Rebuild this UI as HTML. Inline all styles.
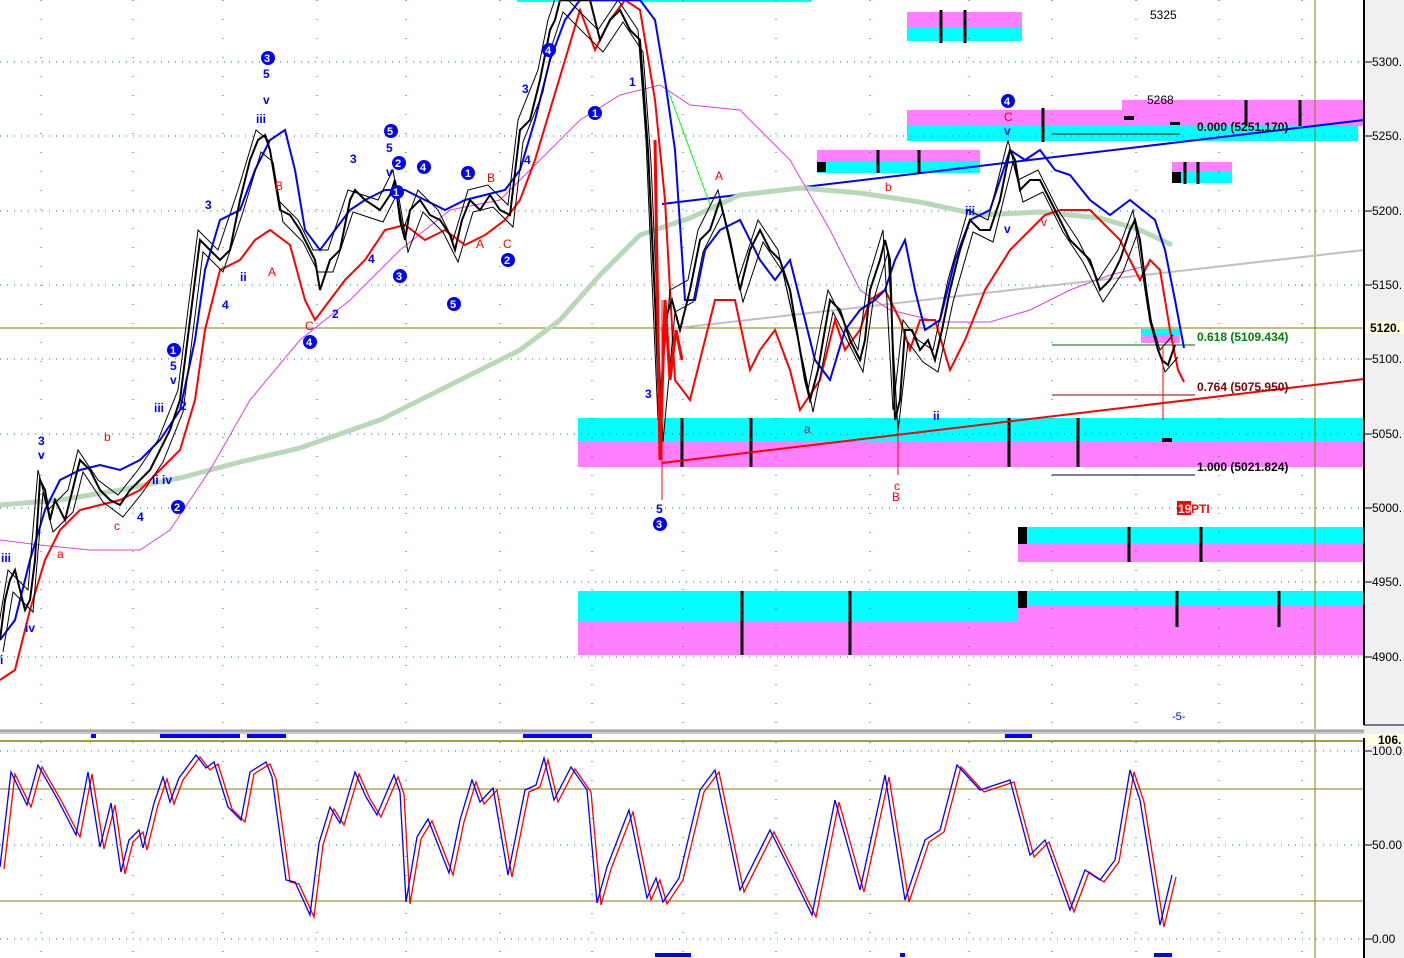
<!DOCTYPE html>
<html><head><meta charset="utf-8"><style>
html,body{margin:0;padding:0;background:#fff;}
svg{display:block;font-family:"Liberation Sans",sans-serif;}
</style></head><body>
<svg width="1404" height="958" viewBox="0 0 1404 958" xmlns="http://www.w3.org/2000/svg">
<rect width="1404" height="958" fill="#fff"/>
<!-- zones -->
<rect x="517" y="0" width="295" height="2" fill="#00ffff"/>
<rect x="907" y="12" width="115" height="15" fill="#ff80ff"/><rect x="907" y="27" width="115" height="14" fill="#00ffff"/>
<rect x="1122" y="100" width="242" height="12" fill="#ff80ff"/>
<rect x="907" y="110" width="457" height="16" fill="#ff80ff"/><rect x="907" y="126" width="451" height="15" fill="#00ffff"/>
<rect x="817" y="150" width="163" height="12" fill="#ff80ff"/><rect x="817" y="162" width="163" height="11" fill="#00ffff"/>
<rect x="1172" y="162" width="60" height="10" fill="#ff80ff"/><rect x="1172" y="172" width="60" height="11" fill="#00ffff"/>
<rect x="1141" y="329" width="39" height="7" fill="#00ffff"/><rect x="1141" y="336" width="39" height="7" fill="#ff80ff"/>
<rect x="578" y="418" width="786" height="24" fill="#00ffff"/><rect x="578" y="442" width="786" height="25" fill="#ff80ff"/>
<rect x="1018" y="527" width="346" height="17" fill="#00ffff"/><rect x="1018" y="544" width="346" height="18" fill="#ff80ff"/>
<rect x="578" y="591" width="440" height="30" fill="#00ffff"/><rect x="578" y="621" width="440" height="34" fill="#ff80ff"/>
<rect x="1018" y="591" width="346" height="15" fill="#00ffff"/><rect x="1018" y="606" width="346" height="49" fill="#ff80ff"/>
<!-- zone bars -->
<g stroke="#000" stroke-width="3">
<line x1="941" y1="10" x2="941" y2="43"/><line x1="965" y1="10" x2="965" y2="43"/>
<line x1="1043" y1="108" x2="1043" y2="142"/><line x1="1246" y1="100" x2="1246" y2="126"/><line x1="1300" y1="100" x2="1300" y2="126"/>
<line x1="878" y1="150" x2="878" y2="173"/><line x1="919" y1="150" x2="919" y2="173"/>
<line x1="1185" y1="162" x2="1185" y2="184"/><line x1="1198" y1="162" x2="1198" y2="184"/>
<line x1="682" y1="418" x2="682" y2="467"/><line x1="751" y1="418" x2="751" y2="467"/><line x1="1009" y1="418" x2="1009" y2="467"/><line x1="1078" y1="418" x2="1078" y2="467"/>
<line x1="1129" y1="527" x2="1129" y2="562"/><line x1="1201" y1="527" x2="1201" y2="562"/>
<line x1="742" y1="591" x2="742" y2="655"/><line x1="850" y1="591" x2="850" y2="655"/><line x1="1177" y1="591" x2="1177" y2="627"/><line x1="1279" y1="591" x2="1279" y2="627"/>
</g>
<rect x="817" y="162" width="9" height="10" fill="#000"/><rect x="1172" y="172" width="9" height="11" fill="#000"/>
<rect x="1018" y="527" width="9" height="17" fill="#000"/><rect x="1018" y="591" width="9" height="17" fill="#000"/>
<rect x="1162" y="438" width="10" height="4" fill="#000"/>
<rect x="1124" y="116" width="10" height="4" fill="#000"/><rect x="1170" y="122" width="10" height="3" fill="#000"/>
<!-- grid -->
<g stroke="#008080" stroke-width="1" stroke-dasharray="1,6">
<line x1="0" y1="62" x2="1364" y2="62"/><line x1="0" y1="136" x2="1364" y2="136"/><line x1="0" y1="211" x2="1364" y2="211"/><line x1="0" y1="285" x2="1364" y2="285"/><line x1="0" y1="359" x2="1364" y2="359"/><line x1="0" y1="434" x2="1364" y2="434"/><line x1="0" y1="508" x2="1364" y2="508"/><line x1="0" y1="582" x2="1364" y2="582"/><line x1="0" y1="657" x2="1364" y2="657"/>
<line x1="0" y1="751" x2="1364" y2="751"/><line x1="0" y1="845" x2="1364" y2="845"/><line x1="0" y1="939" x2="1364" y2="939"/>
</g>
<g stroke="#008080" stroke-width="1" stroke-dasharray="1,18">
<line x1="41" y1="0" x2="41" y2="728"/><line x1="133" y1="0" x2="133" y2="728"/><line x1="223" y1="0" x2="223" y2="728"/><line x1="317" y1="0" x2="317" y2="728"/><line x1="406" y1="0" x2="406" y2="728"/><line x1="500" y1="0" x2="500" y2="728"/><line x1="592" y1="0" x2="592" y2="728"/><line x1="683" y1="0" x2="683" y2="728"/><line x1="776" y1="0" x2="776" y2="728"/><line x1="870" y1="0" x2="870" y2="728"/><line x1="969" y1="0" x2="969" y2="728"/><line x1="1052" y1="0" x2="1052" y2="728"/><line x1="1136" y1="0" x2="1136" y2="728"/><line x1="1219" y1="0" x2="1219" y2="728"/><line x1="1302" y1="0" x2="1302" y2="728"/>
<line x1="41" y1="742" x2="41" y2="958"/><line x1="133" y1="742" x2="133" y2="958"/><line x1="223" y1="742" x2="223" y2="958"/><line x1="317" y1="742" x2="317" y2="958"/><line x1="406" y1="742" x2="406" y2="958"/><line x1="500" y1="742" x2="500" y2="958"/><line x1="592" y1="742" x2="592" y2="958"/><line x1="683" y1="742" x2="683" y2="958"/><line x1="776" y1="742" x2="776" y2="958"/><line x1="870" y1="742" x2="870" y2="958"/><line x1="969" y1="742" x2="969" y2="958"/><line x1="1052" y1="742" x2="1052" y2="958"/><line x1="1136" y1="742" x2="1136" y2="958"/><line x1="1219" y1="742" x2="1219" y2="958"/><line x1="1302" y1="742" x2="1302" y2="958"/>
</g>
<line x1="0" y1="328" x2="1364" y2="328" stroke="#808000" stroke-width="1"/>
<line x1="1315" y1="0" x2="1315" y2="958" stroke="#808000" stroke-width="1"/>
<!-- trend lines -->
<line x1="662" y1="204" x2="1364" y2="120" stroke="#0000ff" stroke-width="2"/>
<line x1="662" y1="463" x2="1364" y2="379" stroke="#ff0000" stroke-width="2"/>
<line x1="660" y1="330" x2="1364" y2="250" stroke="#c0c0c0" stroke-width="2"/>
<line x1="1052" y1="134" x2="1180" y2="134" stroke="#000" stroke-width="1"/>
<line x1="1052" y1="345" x2="1195" y2="345" stroke="#006400" stroke-width="1"/>
<line x1="1052" y1="395" x2="1195" y2="395" stroke="#800000" stroke-width="1"/>
<line x1="1052" y1="475" x2="1195" y2="475" stroke="#000" stroke-width="1"/>
<line x1="668" y1="90" x2="712" y2="210" stroke="#00ff00" stroke-width="1"/>
<!-- green MA -->
<polyline fill="none" stroke="#b8d8b8" stroke-width="5" points="0,505 60,500 120,490 180,478 240,462 300,448 380,420 460,380 520,350 560,320 600,275 640,235 690,218 740,195 800,188 860,193 920,202 980,215 1040,212 1100,218 1140,230 1172,245"/>
<!-- magenta MA -->
<polyline fill="none" stroke="#e040e0" stroke-width="1" points="0,540 40,545 90,550 140,550 170,530 210,470 250,400 300,340 350,300 400,250 450,210 500,200 540,160 580,120 620,95 660,85 690,105 740,110 790,160 830,230 860,290 890,310 940,322 990,322 1030,310 1070,290 1110,275 1150,265"/>
<!-- red band -->
<polyline fill="none" stroke="#ff0000" stroke-width="2" points="0,680 15,670 30,610 45,560 60,530 80,510 100,505 120,500 140,490 160,470 180,450 195,400 205,330 220,270 240,260 255,240 270,230 290,245 305,300 315,320 330,300 345,280 365,260 385,230 405,225 425,240 445,230 465,245 485,235 505,220 520,200 535,160 550,110 565,60 580,10 595,50 610,20 625,0 640,10 655,100 665,200 675,380 690,400 700,360 715,300 735,300 750,370 760,350 775,330 790,370 800,410 820,380 835,320 845,350 860,330 870,300 885,290 900,320 910,350 920,320 935,320 950,370 965,340 985,290 1010,250 1035,225 1045,215 1060,210 1090,210 1120,240 1140,280 1150,260 1160,270 1170,330 1178,370 1184,382"/>
<!-- blue band -->
<polyline fill="none" stroke="#0000ff" stroke-width="2" points="0,640 15,620 30,560 45,510 60,480 80,470 100,465 120,470 140,460 160,440 180,410 195,340 205,270 220,220 240,210 255,170 270,140 285,130 295,170 305,230 320,250 335,230 350,210 365,200 385,190 405,190 425,200 445,210 465,200 485,195 505,190 520,170 535,120 550,60 565,20 580,0 600,0 640,0 655,20 665,80 675,150 685,300 695,300 705,250 720,230 740,220 760,260 775,280 790,260 805,320 815,360 830,380 845,330 860,310 875,300 885,290 895,260 905,240 915,290 925,330 940,320 955,260 970,220 990,210 1010,150 1025,160 1040,150 1055,170 1070,175 1090,200 1110,215 1130,200 1155,220 1165,250 1175,300 1184,348"/>
<!-- price bars (black) -->
<g fill="none" stroke="#000">
<polyline stroke-width="2" points="0,640 5,600 10,580 15,570 20,590 25,610 30,600 35,560 40,480 45,490 50,520 55,500 60,510 65,520 70,500 80,460 90,470 100,490 110,500 120,505 130,490 140,480 150,470 160,450 170,430 180,400 190,320 200,240 210,250 220,260 230,250 240,200 250,160 258,140 265,135 270,150 280,210 290,215 300,230 310,250 315,260 320,290 330,260 340,250 350,200 355,190 365,200 380,210 390,195 395,180 400,220 405,240 410,210 420,200 430,215 440,220 450,235 455,250 462,220 470,200 480,210 490,195 500,210 510,215 520,130 530,120 540,80 550,30 555,20 560,0 590,0 600,40 610,20 620,10 630,30 640,40 648,150 655,300 660,430 665,320 672,300 680,330 690,290 700,240 710,230 720,200 730,240 740,290 750,250 760,230 770,250 780,260 790,290 800,350 805,380 810,400 818,370 830,300 840,310 850,340 860,360 865,340 870,290 880,260 885,240 890,260 895,420 900,400 905,330 912,330 920,350 928,340 935,360 942,330 950,290 960,250 970,220 980,230 990,230 1000,200 1010,150 1015,160 1020,190 1030,180 1040,180 1050,200 1060,220 1070,240 1080,250 1090,260 1100,290 1110,280 1120,260 1130,230 1135,220 1140,240 1145,280 1150,320 1158,350 1162,360 1168,365 1175,345"/>
<polyline stroke-width="1" transform="translate(3,12)" points="0,640 10,580 20,590 30,600 40,480 50,520 60,510 70,500 80,460 100,490 120,505 140,480 160,450 180,400 190,320 200,240 220,260 240,200 258,140 270,150 280,210 300,230 315,260 330,260 350,200 380,210 395,180 405,240 420,200 440,220 455,250 470,200 490,195 510,215 520,130 540,80 550,30 560,0 600,40 620,10 640,40 648,150 660,430 672,300 690,290 700,240 720,200 740,290 760,230 780,260 800,350 810,400 830,300 850,340 860,360 870,290 885,240 895,420 905,330 920,350 935,360 950,290 970,220 990,230 1010,150 1020,190 1040,180 1060,220 1080,250 1100,290 1120,260 1135,220 1150,320 1162,360 1175,345"/>
<polyline stroke-width="1" transform="translate(-2,-10)" points="0,640 10,580 20,590 30,600 40,480 50,520 60,510 70,500 80,460 100,490 120,505 140,480 160,450 180,400 190,320 200,240 220,260 240,200 258,140 270,150 280,210 300,230 315,260 330,260 350,200 380,210 395,180 405,240 420,200 440,220 455,250 470,200 490,195 510,215 520,130 540,80 550,30 560,0 600,40 620,10 640,40 648,150 660,430 672,300 690,290 700,240 720,200 740,290 760,230 780,260 800,350 810,400 830,300 850,340 860,360 870,290 885,240 895,420 905,330 920,350 935,360 950,290 970,220 990,230 1010,150 1020,190 1040,180 1060,220 1080,250 1100,290 1120,260 1135,220 1150,320 1162,360 1175,345"/>
</g>
<polyline fill="none" stroke="#ff0000" stroke-width="3" points="655,140 660,460 665,300 670,380 676,330 682,360"/>
<line x1="1163" y1="345" x2="1163" y2="420" stroke="#ff0000" stroke-width="1"/>
<line x1="898" y1="420" x2="898" y2="475" stroke="#ff0000" stroke-width="1"/>
<line x1="662" y1="300" x2="662" y2="500" stroke="#ff0000" stroke-width="1"/>
<!-- labels -->
<g font-size="12" font-weight="bold" fill="#0000ff">
<text x="1" y="562">iii</text><text x="25" y="632">iv</text><text x="0" y="664">i</text>
<text x="38" y="445">3</text><text x="38" y="459">v</text>
<text x="170" y="370">5</text><text x="170" y="384">v</text><text x="154" y="412">iii</text><text x="152" y="484">ii</text><text x="162" y="484">iv</text><text x="137" y="521">4</text>
<text x="180" y="410">2</text><text x="205" y="209">3</text><text x="222" y="309">4</text><text x="240" y="281">ii</text>
<text x="263" y="78">5</text><text x="263" y="104">v</text><text x="256" y="123">iii</text>
<text x="350" y="163">3</text><text x="386" y="152">5</text><text x="386" y="176">v</text><text x="368" y="263">4</text><text x="332" y="318">2</text>
<text x="522" y="93">3</text><text x="524" y="164">4</text><text x="629" y="86">1</text><text x="645" y="398">3</text><text x="656" y="513">5</text>
<text x="965" y="215">iii</text><text x="1004" y="135">v</text><text x="1004" y="233">v</text><text x="933" y="420">ii</text><text x="1172" y="720" font-weight="normal" font-size="11">-5-</text>
</g>
<g font-size="12" fill="#ff0000">
<text x="104" y="441">b</text><text x="57" y="558">a</text><text x="114" y="530">c</text>
<text x="275" y="190">B</text><text x="268" y="276">A</text><text x="305" y="330">C</text>
<text x="487" y="182">B</text><text x="476" y="248">A</text><text x="503" y="248">C</text>
<text x="715" y="180">A</text><text x="885" y="191">b</text><text x="804" y="433">a</text><text x="894" y="490">c</text><text x="892" y="501">B</text>
<text x="1004" y="121">C</text><text x="1041" y="226">v</text>
</g>
<g font-size="11" font-weight="bold" fill="#fff">
<g fill="#0000ff"><circle cx="268" cy="58" r="7"/><circle cx="174" cy="350" r="7"/><circle cx="178" cy="507" r="7"/><circle cx="310" cy="342" r="7"/><circle cx="391" cy="131" r="7"/><circle cx="399" cy="163" r="7"/><circle cx="424" cy="167" r="7"/><circle cx="397" cy="192" r="7"/><circle cx="400" cy="276" r="7"/><circle cx="454" cy="304" r="7"/><circle cx="468" cy="173" r="7"/><circle cx="508" cy="260" r="7"/><circle cx="549" cy="50" r="7"/><circle cx="595" cy="113" r="7"/><circle cx="660" cy="524" r="7"/><circle cx="1008" cy="101" r="7"/></g>
<text x="264" y="62">3</text><text x="170" y="354">1</text><text x="174" y="511">2</text><text x="306" y="346">4</text><text x="387" y="135">5</text><text x="395" y="167">2</text><text x="420" y="171">4</text><text x="393" y="196">1</text><text x="396" y="280">3</text><text x="450" y="308">5</text><text x="465" y="177">1</text><text x="504" y="264">2</text><text x="545" y="54">4</text><text x="592" y="117">1</text><text x="656" y="528">3</text><text x="1004" y="105">4</text>
</g>
<g font-size="12" font-weight="bold">
<text x="1150" y="19" fill="#000" font-weight="normal">5325</text>
<text x="1147" y="104" fill="#000" font-weight="normal">5268</text>
<text x="1197" y="131" fill="#000">0.000 (5251.170)</text>
<text x="1197" y="341" fill="#008000">0.618 (5109.434)</text>
<text x="1197" y="391" fill="#800000">0.764 (5075.950)</text>
<text x="1197" y="471" fill="#000">1.000 (5021.824)</text>
<rect x="1177" y="501" width="14" height="14" fill="#ff0000"/><text x="1178" y="513" fill="#fff">19</text><text x="1191" y="513" fill="#ff0000">PTI</text>
</g>
<!-- separator -->
<rect x="0" y="729" width="1404" height="5" fill="#c8c8c8"/>
<line x1="0" y1="731" x2="1404" y2="731" stroke="#888" stroke-width="1"/>
<g fill="#0000ff"><rect x="91" y="734" width="5" height="4"/><rect x="160" y="734" width="80" height="4"/><rect x="247" y="734" width="39" height="4"/><rect x="523" y="734" width="69" height="4"/><rect x="1005" y="734" width="27" height="4"/><rect x="655" y="953" width="36" height="4"/><rect x="900" y="953" width="5" height="4"/><rect x="1154" y="953" width="18" height="4"/></g>
<line x1="0" y1="741" x2="1364" y2="741" stroke="#808000" stroke-width="1.5"/>
<line x1="0" y1="789" x2="1364" y2="789" stroke="#808000" stroke-width="1"/>
<line x1="0" y1="901" x2="1364" y2="901" stroke="#808000" stroke-width="1"/>
<!-- oscillator -->
<polyline fill="none" stroke="#ff0000" stroke-width="1.3" transform="translate(4,2)" points="0,867 11,772 27,805 38,765 58,800 76,835 88,772 100,847 111,803 121,872 129,840 139,830 143,848 154,803 163,777 170,802 179,778 196,755 206,768 214,762 228,807 241,820 250,772 266,762 272,777 286,880 295,882 310,915 319,843 330,807 340,823 355,772 366,797 377,815 394,775 400,792 406,902 417,837 428,819 449,873 460,820 472,780 480,802 493,788 508,875 525,790 536,785 544,758 554,800 571,767 587,790 597,903 607,867 629,810 647,898 656,878 663,902 679,878 700,790 715,770 740,890 770,830 790,870 812,915 835,800 860,890 885,775 905,900 925,840 940,830 957,765 980,790 1010,780 1030,855 1045,840 1070,910 1085,870 1100,880 1115,860 1130,770 1140,800 1160,925 1172,875"/>
<polyline fill="none" stroke="#0000ff" stroke-width="1.3" points="0,867 11,772 27,805 38,765 58,800 76,835 88,772 100,847 111,803 121,872 129,840 139,830 143,848 154,803 163,777 170,802 179,778 196,755 206,768 214,762 228,807 241,820 250,772 266,762 272,777 286,880 295,882 310,915 319,843 330,807 340,823 355,772 366,797 377,815 394,775 400,792 406,902 417,837 428,819 449,873 460,820 472,780 480,802 493,788 508,875 525,790 536,785 544,758 554,800 571,767 587,790 597,903 607,867 629,810 647,898 656,878 663,902 679,878 700,790 715,770 740,890 770,830 790,870 812,915 835,800 860,890 885,775 905,900 925,840 940,830 957,765 980,790 1010,780 1030,855 1045,840 1070,910 1085,870 1100,880 1115,860 1130,770 1140,800 1160,925 1172,875"/>
<!-- right axis -->
<rect x="1364" y="0" width="40" height="958" fill="#f0f0f0"/>
<line x1="1364" y1="0" x2="1364" y2="725" stroke="#000" stroke-width="2"/>
<line x1="1364" y1="738" x2="1364" y2="958" stroke="#000" stroke-width="2"/>
<line x1="1364" y1="725" x2="1404" y2="725" stroke="#000"/>
<g stroke="#000"><line x1="1364" y1="62" x2="1372" y2="62"/><line x1="1364" y1="136" x2="1372" y2="136"/><line x1="1364" y1="211" x2="1372" y2="211"/><line x1="1364" y1="285" x2="1372" y2="285"/><line x1="1364" y1="359" x2="1372" y2="359"/><line x1="1364" y1="434" x2="1372" y2="434"/><line x1="1364" y1="508" x2="1372" y2="508"/><line x1="1364" y1="582" x2="1372" y2="582"/><line x1="1364" y1="657" x2="1372" y2="657"/><line x1="1364" y1="751" x2="1372" y2="751"/><line x1="1364" y1="845" x2="1372" y2="845"/><line x1="1364" y1="939" x2="1372" y2="939"/></g>
<g font-size="12" fill="#000">
<text x="1372" y="66">5300.</text><text x="1372" y="140">5250.</text><text x="1372" y="215">5200.</text><text x="1372" y="289">5150.</text><text x="1372" y="363">5100.</text><text x="1372" y="438">5050.</text><text x="1372" y="512">5000.</text><text x="1372" y="586">4950.</text><text x="1372" y="661">4900.</text>
<text x="1372" y="755">100.0</text><text x="1372" y="849">50.00</text><text x="1372" y="943">0.00</text>
</g>
<rect x="1366" y="321" width="38" height="13" fill="#ffffe0"/><text x="1370" y="332" font-size="12" font-weight="bold">5120.</text>
<rect x="1366" y="734" width="38" height="11" fill="#ffffe0"/><text x="1378" y="744" font-size="12" font-weight="bold">106.</text>
</svg>
</body></html>
